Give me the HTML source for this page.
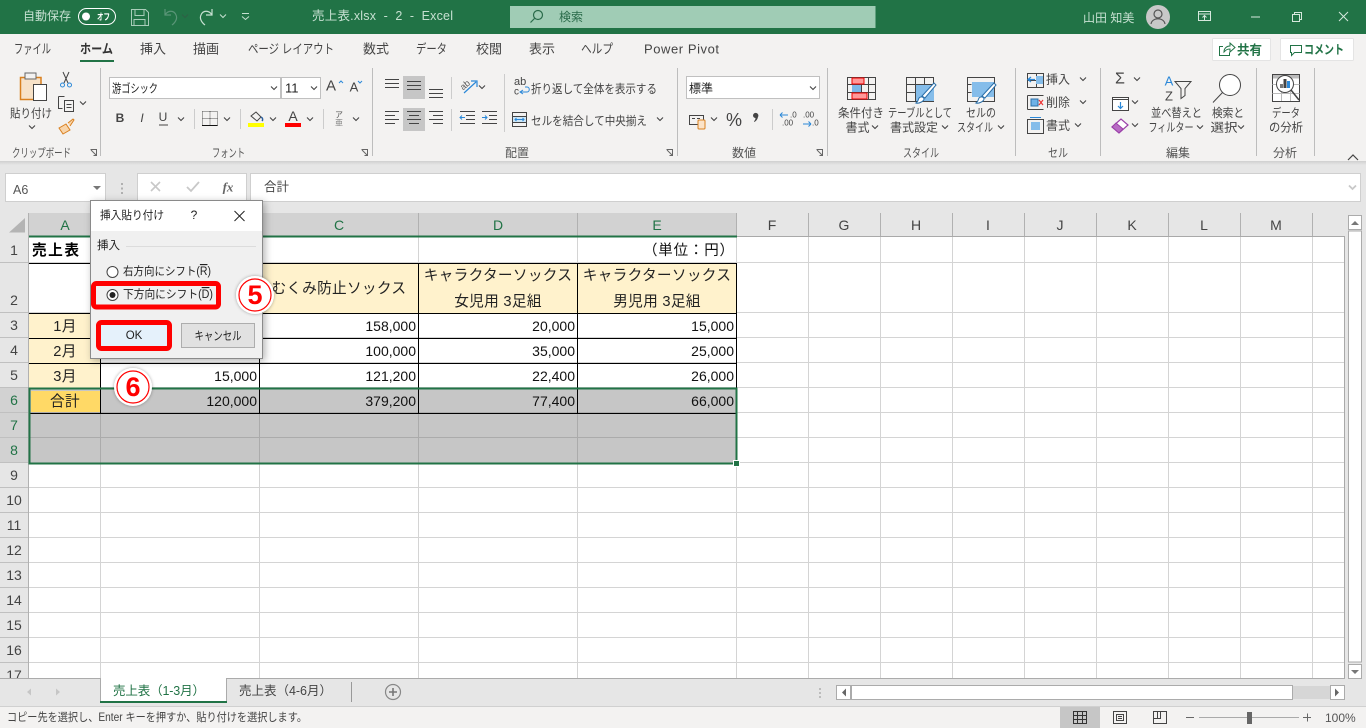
<!DOCTYPE html>
<html lang="ja"><head><meta charset="utf-8"><title>売上表</title>
<style>
html,body{margin:0;padding:0;width:1366px;height:728px;overflow:hidden;background:#e6e6e6}
svg{display:block;position:absolute;left:0;top:0}
text{font-family:"Liberation Sans","Noto Sans CJK JP",sans-serif;dominant-baseline:central;white-space:pre}
.r{font-size:12px;fill:#444;transform:translateY(.5px)}
.g{font-size:12px;fill:#555;transform:translateY(1px)}
.m{text-anchor:middle}
.e{text-anchor:end}
.tt{font-size:12px;fill:#c6e0d1}
.tab{font-size:13px;fill:#444}
.cell{font-size:14px;fill:#111;text-anchor:end}
.jp{font-size:14.67px;fill:#222;text-anchor:middle;letter-spacing:.3px}
.h{font-size:14px;fill:#444;text-anchor:middle}
.hs{font-size:14px;fill:#217346;text-anchor:middle}
.d{font-size:11.5px;fill:#222}
.i{fill:none;stroke:#444;stroke-width:1}
.b{fill:none;stroke:#666;stroke-width:1}
</style></head><body>
<svg width="1366" height="728" viewBox="0 0 1366 728" xmlns="http://www.w3.org/2000/svg">
<defs>
<path id="c" d="M-3 -1.5L0 1.5L3 -1.5" fill="none" stroke="#444" stroke-width="1.1"/>
<filter id="sh" x="-15%" y="-15%" width="130%" height="130%"><feDropShadow dx="2" dy="2" stdDeviation="4" flood-color="#000" flood-opacity=".3"/></filter>
<filter id="sh2" x="-25%" y="-25%" width="150%" height="150%"><feDropShadow dx="0" dy="0" stdDeviation="1.5" flood-color="#000" flood-opacity=".35"/></filter>
<linearGradient id="rs" x1="0" y1="0" x2="0" y2="1"><stop offset="0" stop-color="#cfcfcf"/><stop offset="1" stop-color="#e6e6e6"/></linearGradient>
</defs>

<!-- backgrounds -->
<rect width="1366" height="728" fill="#e6e6e6"/>
<rect width="1366" height="34" fill="#217346"/>
<rect y="34" width="1366" height="127" fill="#f3f2f1"/>
<rect y="161" width="1366" height="4" fill="url(#rs)"/>

<!-- title bar -->
<text x="23" y="16" class="tt">自動保存</text>
<rect x="78.500" y="8.500" width="37" height="16" rx="8" fill="none" stroke="#fff"/>
<circle cx="86" cy="16.500" r="4" fill="#fff"/>
<text x="97" y="17" font-size="9" font-weight="bold" fill="#fff" textLength="13" lengthAdjust="spacingAndGlyphs">オフ</text>
<path d="M131.500 9.500h14l3 3v13h-17zM135 9.500v6h9v-6M134 25.500v-6h11v6" fill="none" stroke="#a9cdb9"/>
<path d="M165 9v6h6M165 15c3-5 9-5 11 0 1.500 3 0 7-4 10" fill="none" stroke="#5a9577" stroke-width="1.200"/>
<use href="#c" x="185" y="16" style="opacity:.4"/>
<path d="M212 9v6h-6M212 15c-3-5-9-5-11 0-1.500 3 0 7 4 10" fill="none" stroke="#c6e0d1" stroke-width="1.200"/>
<path d="M220 14.500l3 3 3-3" fill="none" stroke="#c6e0d1"/>
<path d="M242 13.500h7M242 16.500l3.500 3 3.500-3" fill="none" stroke="#c6e0d1"/>
<text x="312" y="16" font-size="12.500" fill="#c6e0d1" textLength="141" lengthAdjust="spacing">売上表.xlsx  -  2  -  Excel</text>
<rect x="510" y="6" width="365.500" height="22" fill="#a0ccb5"/>
<circle cx="538" cy="15" r="4.500" fill="none" stroke="#2a6b4a" stroke-width="1.200"/>
<path d="M534.500 18.500l-4 4" stroke="#2a6b4a" stroke-width="1.200"/>
<text x="559" y="17" font-size="12" fill="#2a6b4a">検索</text>
<text x="1083" y="18" class="tt">山田 知美</text>
<circle cx="1158" cy="17" r="12" fill="#c8c8c8"/>
<circle cx="1158" cy="14" r="4" fill="none" stroke="#555" stroke-width="1.200"/>
<path d="M1151 24c1-7 13-7 14 0" fill="none" stroke="#555" stroke-width="1.200"/>
<path d="M1198.500 11.500h12v9h-12zM1198.500 14h12M1204.500 20v-4M1202.500 17.500l2-2 2 2" fill="none" stroke="#d6e8dd"/>
<path d="M1251 17h9" stroke="#d6e8dd"/>
<path d="M1292.500 14.500h7v7h-7zM1294.500 14.500v-2h7v7h-2" fill="none" stroke="#d6e8dd"/>
<path d="M1339 12l9 9M1348 12l-9 9" stroke="#d6e8dd"/>

<!-- tabs -->
<text x="14" y="49" class="tab" textLength="37" lengthAdjust="spacingAndGlyphs">ファイル</text>
<text x="80" y="49" class="tab" font-weight="bold" style="fill:#333" textLength="33" lengthAdjust="spacingAndGlyphs">ホーム</text>
<rect x="80" y="60" width="34" height="2" fill="#217346"/>
<text x="140" y="49" class="tab">挿入</text>
<text x="193" y="49" class="tab">描画</text>
<text x="248" y="49" class="tab" textLength="86" lengthAdjust="spacingAndGlyphs">ページ レイアウト</text>
<text x="363" y="49" class="tab">数式</text>
<text x="416" y="49" class="tab" textLength="31" lengthAdjust="spacingAndGlyphs">データ</text>
<text x="476" y="49" class="tab">校閲</text>
<text x="529" y="49" class="tab">表示</text>
<text x="581" y="49" class="tab" textLength="32" lengthAdjust="spacingAndGlyphs">ヘルプ</text>
<text x="644" y="49" class="tab" textLength="75" lengthAdjust="spacing">Power Pivot</text>
<rect x="1212.500" y="38.500" width="58" height="22" rx="1" fill="#fff" stroke="#e4e4e4"/>
<path d="M1223 46.500h-3.500v9h10v-3M1224 52c0-4 3-6 6-6v-3l5 4.500-5 4.500v-3c-3 0-4 1-6 3z" fill="none" stroke="#217346"/>
<text x="1237" y="50" font-size="13" font-weight="bold" fill="#217346" textLength="25" lengthAdjust="spacingAndGlyphs">共有</text>
<rect x="1280.500" y="38.500" width="73" height="22" rx="1" fill="#fff" stroke="#e4e4e4"/>
<path d="M1290.500 45.500h11v7h-7l-3 3v-3h-1z" fill="none" stroke="#217346"/>
<text x="1304" y="50" font-size="12.500" font-weight="bold" fill="#217346" textLength="40" lengthAdjust="spacingAndGlyphs">コメント</text>

<!-- group separators -->
<path d="M100.500 68V156M372.500 68V156M677.500 68V156M827.500 68V156M1015.500 68V156M1100.500 68V156M1256.500 68V156M1314.500 68V156" stroke="#bdbdbd"/>
<!-- group labels -->
<text x="12" y="152" class="g" textLength="59" lengthAdjust="spacingAndGlyphs">クリップボード</text>
<text x="228.500" y="152" class="g m" textLength="33" lengthAdjust="spacingAndGlyphs">フォント</text>
<text x="517" y="152" class="g m">配置</text>
<text x="744" y="152" class="g m">数値</text>
<text x="921" y="152" class="g m" textLength="36" lengthAdjust="spacingAndGlyphs">スタイル</text>
<text x="1058" y="152" class="g m" textLength="20" lengthAdjust="spacingAndGlyphs">セル</text>
<text x="1178" y="152" class="g m">編集</text>
<text x="1285" y="152" class="g m">分析</text>
<path class="b" d="M90.500 149.500h6v6M91 150l5 5M96.500 152.500v3h-3"/>
<path class="b" d="M361.500 149.500h6v6M362 150l5 5M367.500 152.500v3h-3"/>
<path class="b" d="M666.500 149.500h6v6M667 150l5 5M672.500 152.500v3h-3"/>
<path class="b" d="M816.500 149.500h6v6M817 150l5 5M822.500 152.500v3h-3"/>
<path d="M1348 160l5-5 5 5" fill="none" stroke="#444" stroke-width="1.200"/>

<!-- clipboard -->
<path d="M20.500 77.500h20.500v22h-20.500z" fill="#f7e2c8" stroke="#d9801f" stroke-width="1.500"/>
<rect x="25" y="73" width="11" height="6" fill="#f3f2f1" stroke="#666"/>
<rect x="33.500" y="84.500" width="13" height="16" fill="#fff" stroke="#444"/>
<text x="31" y="113" class="r m" textLength="42" lengthAdjust="spacingAndGlyphs">貼り付け</text>
<use href="#c" x="32" y="127"/>
<path d="M63 72l5 11M69 72l-5 11" stroke="#444" fill="none"/>
<circle cx="62.500" cy="85" r="2" fill="none" stroke="#2b88d8"/><circle cx="69.500" cy="85" r="2" fill="none" stroke="#2b88d8"/>
<path d="M58.500 96.500h6M58.500 96.500v12h4M64.500 100.500h9v11h-9zM66.500 104.500h5M66.500 107.500h5" fill="none" stroke="#444"/>
<use href="#c" x="83" y="103"/>
<path d="M59 128l7-4 4 6-7 4zM68 123l5-4 1 1-4 6" fill="#f8d5ab" stroke="#d9801f"/>

<!-- font group -->
<rect x="109.500" y="77.500" width="171" height="21" fill="#fff" stroke="#c0c0c0"/>
<rect x="281.500" y="77.500" width="39" height="21" fill="#fff" stroke="#c0c0c0"/>
<text x="112" y="88" class="r" style="fill:#222" textLength="46" lengthAdjust="spacingAndGlyphs">游ゴシック</text>
<use href="#c" x="274" y="88"/>
<text x="285" y="88" font-size="13" fill="#222">11</text>
<use href="#c" x="314" y="88"/>
<text x="331" y="86" font-size="15" fill="#444" text-anchor="middle">A</text>
<path d="M339 83l2-2 2 2" fill="none" stroke="#2b88d8"/>
<text x="354" y="87" font-size="13" fill="#444" text-anchor="middle">A</text>
<path d="M358 81l2 2 2-2" fill="none" stroke="#2b88d8"/>
<text x="120" y="118" font-size="12" font-weight="bold" fill="#444" text-anchor="middle">B</text>
<text x="142" y="118" font-size="12" font-style="italic" fill="#444" text-anchor="middle">I</text>
<text x="163" y="117" font-size="12" fill="#444" text-anchor="middle">U</text>
<path d="M159 125h9" stroke="#444"/>
<use href="#c" x="181" y="119"/>
<path d="M194.500 109v20M240.500 109v20M323.500 109v20M451.500 77v22M451.500 109v22M504.500 74v58" stroke="#ccc"/>
<path d="M202.500 111.500h15v14M202.500 111.500v14M210 111.500v14M202.500 118.500h15" fill="none" stroke="#555" stroke-dasharray="1 1"/>
<path d="M202 125.500h15.500" stroke="#111"/>
<use href="#c" x="227" y="119"/>
<path d="M251 116l5-4 5 5-4 4z" fill="none" stroke="#444"/><path d="M261 117c2 1 2 3 1 4" stroke="#2b5f9e" fill="none" stroke-width="1.500"/>
<rect x="248" y="123" width="16" height="4" fill="#ffff00"/>
<use href="#c" x="273" y="119"/>
<text x="293" y="116" font-size="14" fill="#444" text-anchor="middle">A</text>
<rect x="285" y="123" width="16" height="4" fill="#ff0000"/>
<use href="#c" x="310" y="119"/>
<text x="339" y="115" font-size="8" fill="#555" text-anchor="middle">ア</text>
<text x="339" y="123" font-size="8" fill="#888" text-anchor="middle">亜</text>
<use href="#c" x="356" y="119"/>

<!-- alignment -->
<rect x="403" y="76" width="22" height="23" fill="#c6c6c6"/>
<rect x="403" y="108" width="22" height="23" fill="#c6c6c6"/>
<path d="M385 79.500h14M385 83.500h14M385 87.500h14M407 81.500h14M407 85.500h14M407 89.500h14M429 89.500h14M429 93.500h14M429 97.500h14" stroke="#444"/>
<path d="M385 111.500h14M385 115.500h10M385 119.500h14M385 123.500h10M407 111.500h14M409 115.500h10M407 119.500h14M409 123.500h10M429 111.500h14M433 115.500h10M429 119.500h14M433 123.500h10" stroke="#444"/>
<text x="465" y="85" font-size="9" fill="#555" transform="rotate(-40 465 85)" text-anchor="middle">ab</text>
<path d="M464 93l12-11M471 81h6v6" fill="none" stroke="#2b88d8" stroke-width="1.200"/>
<use href="#c" x="482" y="87"/>
<path d="M460 111.500h15M466 115.500h9M466 119.500h9M460 123.500h15M482 111.500h15M489 115.500h8M489 119.500h8M482 123.500h15" stroke="#444"/>
<path d="M465 117.500h-5M462 115.500l-2 2 2 2M482 117.500h5M485 115.500l2 2-2 2" fill="none" stroke="#2b88d8"/>
<text x="514" y="82" font-size="11" fill="#444">ab</text>
<text x="514" y="92" font-size="10" fill="#444">c</text>
<path d="M520 92h7c3 0 3-5 0-5h-2M523 90l-3 2 3 2" fill="none" stroke="#2b88d8"/>
<text x="531" y="88.500" class="r" textLength="126" lengthAdjust="spacingAndGlyphs">折り返して全体を表示する</text>
<path d="M512.500 112.500h14v14h-14zM512.500 116.500h14M512.500 122.500h14" fill="none" stroke="#444"/>
<rect x="513" y="117" width="13" height="5" fill="#cde6f7"/>
<path d="M515 119.500h9M516.500 118l-1.500 1.500 1.500 1.500M522.500 118l1.500 1.500-1.500 1.500" fill="none" stroke="#2b88d8"/>
<text x="531" y="120.500" class="r" textLength="116" lengthAdjust="spacingAndGlyphs">セルを結合して中央揃え</text>
<use href="#c" x="660" y="119"/>

<!-- number -->
<rect x="686.500" y="76.500" width="133" height="22" fill="#fff" stroke="#c0c0c0"/>
<text x="689" y="88" class="r" style="fill:#222">標準</text>
<use href="#c" x="813" y="88"/>
<path d="M689.500 115.500h14v9h-14zM692 118.500h3M697 118.500h3" fill="none" stroke="#444"/>
<rect x="698" y="120" width="7" height="9" rx="1" fill="#fbe3c8" stroke="#d9801f"/>
<use href="#c" x="714" y="119"/>
<text x="734" y="120" font-size="18" fill="#444" text-anchor="middle">%</text>
<path d="M753 115.500a2.700 2.700 0 1 1 5 1.500c-.5 2.500-2 4-3.500 5l-.5-.7c1-1 1.500-2 1.500-3.300a2.700 2.700 0 0 1-2.500-2.500z" fill="#444"/>
<path d="M772.500 109v21" stroke="#ccc"/>
<path d="M780 115h8M780 115l2.500-2.500M780 115l2.500 2.500M803 124h8M811 124l-2.500-2.500M811 124l-2.500 2.500" fill="none" stroke="#2b88d8"/>
<text x="790" y="115" font-size="8" fill="#444">.0</text>
<text x="782" y="123" font-size="8" fill="#444">.00</text>
<text x="803" y="115" font-size="8" fill="#444">.00</text>
<text x="812" y="123" font-size="8" fill="#444">.0</text>

<!-- styles -->
<path d="M847.500 77.500h28v22h-28zM847.500 84.500h28M847.500 92.500h28M854.500 77.500v22M861.500 77.500v22M868.500 77.500v22" fill="none" stroke="#444"/>
<rect x="852" y="78" width="12" height="6" fill="#f99" stroke="#e00"/><rect x="852" y="93" width="15" height="6" fill="#f99" stroke="#e00"/><rect x="852" y="85" width="9" height="7" fill="#7db8e8"/>
<path d="M906.500 77.500h27v24h-27zM906.500 84.500h27M906.500 92.500h27M915.500 77.500v24M924.500 77.500v24" fill="none" stroke="#444"/>
<rect x="916" y="85" width="18" height="16" fill="#85bdea"/>
<path d="M922 96l12-13 2 2-11 13zM919 98c2-2 5-1 5 1s-5 5-8 4c2-1 2-3 3-5z" fill="#fff" stroke="#2b6fa8"/>
<path d="M967.500 77.500h27v24h-27z" fill="none" stroke="#444"/>
<rect x="972" y="82" width="22" height="15" fill="#85bdea"/>
<path d="M967.500 84.500h4M967.500 92.500h4" stroke="#444"/>
<path d="M982 96l12-13 2 2-11 13zM979 98c2-2 5-1 5 1s-5 5-8 4c2-1 2-3 3-5z" fill="#fff" stroke="#2b6fa8"/>
<text x="861" y="112.500" class="r m" textLength="46" lengthAdjust="spacingAndGlyphs">条件付き</text>
<text x="857.500" y="127" class="r m" textLength="24" lengthAdjust="spacingAndGlyphs">書式</text><use href="#c" x="875" y="127"/>
<text x="920" y="112.500" class="r m" textLength="64" lengthAdjust="spacingAndGlyphs">テーブルとして</text>
<text x="914" y="127" class="r m" textLength="48" lengthAdjust="spacingAndGlyphs">書式設定</text><use href="#c" x="945" y="127"/>
<text x="981" y="112.500" class="r m" textLength="30" lengthAdjust="spacingAndGlyphs">セルの</text>
<text x="975" y="127" class="r m" textLength="36" lengthAdjust="spacingAndGlyphs">スタイル</text><use href="#c" x="1001" y="127"/>

<!-- cells -->
<path d="M1027.500 73.500h16v14h-16zM1027.500 80.500h16M1036.500 73.500v14" fill="none" stroke="#444"/>
<rect x="1036" y="76" width="7" height="8" fill="#85bdea"/>
<path d="M1035 79.500h-7M1031 77l-3 2.500 3 2.500" fill="none" stroke="#2b88d8" stroke-width="1.200"/>
<text x="1046" y="79" class="r" textLength="24" lengthAdjust="spacingAndGlyphs">挿入</text><use href="#c" x="1083" y="79"/>
<path d="M1027.500 95.500h16M1027.500 109.500h16M1027.500 95.500v14" fill="none" stroke="#444"/>
<rect x="1031" y="99" width="7" height="7" fill="#6fb1e6" stroke="#2b6fa8"/>
<path d="M1039 100l4 5M1043 100l-4 5" stroke="#e33" stroke-width="1.200"/>
<text x="1046" y="102" class="r" textLength="24" lengthAdjust="spacingAndGlyphs">削除</text><use href="#c" x="1083" y="102"/>
<path d="M1027.500 119.500h16v14h-16z" fill="none" stroke="#444"/>
<rect x="1031" y="122" width="9" height="8" fill="#85bdea"/>
<path d="M1030 117.500h11" stroke="#2b88d8"/>
<text x="1046" y="125" class="r" textLength="24" lengthAdjust="spacingAndGlyphs">書式</text><use href="#c" x="1078" y="125"/>

<!-- editing -->
<text x="1120" y="79" font-size="16" fill="#444" text-anchor="middle">Σ</text><use href="#c" x="1137" y="79"/>
<path d="M1112.500 97.500h16v13h-16z" fill="#fff" stroke="#444"/>
<path d="M1112.500 99.500h16" stroke="#444"/>
<path d="M1120.500 102v6M1118 106l2.500 2.500 2.500-2.500" fill="none" stroke="#2b88d8" stroke-width="1.200"/>
<use href="#c" x="1135" y="102"/>
<path d="M1112 127l9-8 7 6-9 8z" fill="#fff" stroke="#9a3fa8" stroke-width="1.200"/>
<path d="M1112 127l4-4 7 6-4 4z" fill="#b86bc4" stroke="#9a3fa8"/>
<use href="#c" x="1135" y="125"/>
<text x="1169" y="81" font-size="13" fill="#2b88d8" text-anchor="middle">A</text>
<text x="1169" y="96" font-size="13" fill="#444" text-anchor="middle">Z</text>
<path d="M1175 81.500h16l-6 7v7l-4 3v-10z" fill="none" stroke="#444"/>
<text x="1176.500" y="112.500" class="r m" textLength="51" lengthAdjust="spacingAndGlyphs">並べ替えと</text>
<text x="1171" y="127" class="r m" textLength="45" lengthAdjust="spacingAndGlyphs">フィルター</text><use href="#c" x="1200" y="127"/>
<circle cx="1230" cy="85" r="10.500" fill="#fff" stroke="#444"/>
<path d="M1222.500 92.500l-9.500 10" stroke="#444"/>
<text x="1228" y="112.500" class="r m" textLength="32" lengthAdjust="spacingAndGlyphs">検索と</text>
<text x="1224" y="127" class="r m" textLength="27" lengthAdjust="spacingAndGlyphs">選択</text><use href="#c" x="1241" y="127"/>

<!-- analysis -->
<rect x="1272.500" y="74.500" width="27" height="27" fill="#fff" stroke="#444"/>
<rect x="1273" y="75" width="26" height="3.500" fill="#bbb"/>
<path d="M1272.500 84.500h27M1272.500 93.500h27M1281.500 78v23M1290.500 78v23" stroke="#bbb"/>
<circle cx="1285" cy="84" r="8.500" fill="#fff" stroke="#444"/>
<rect x="1280" y="84" width="3" height="4" fill="#777"/><rect x="1283.500" y="79" width="3" height="9" fill="#444"/><rect x="1287" y="81" width="3" height="7" fill="#2b88d8"/>
<path d="M1291 90l8 10" stroke="#444" stroke-width="1.500"/>
<text x="1286" y="112.500" class="r m" textLength="28" lengthAdjust="spacingAndGlyphs">データ</text>
<text x="1286" y="127" class="r m" textLength="34" lengthAdjust="spacingAndGlyphs">の分析</text>

<!-- formula bar -->
<rect x="5.500" y="173.500" width="100" height="28" fill="#fff" stroke="#cfcfcf"/>
<text x="13" y="190" font-size="12.500" fill="#555">A6</text>
<path d="M93 186h8l-4 4z" fill="#777"/>
<path d="M122 183v2M122 187.500v2M122 192v2" stroke="#999" stroke-width="1.400"/>
<rect x="137.500" y="173.500" width="109" height="28" fill="#fff" stroke="#cfcfcf"/>
<path d="M151 182l9 9M160 182l-9 9" stroke="#c8c8c8" stroke-width="1.600"/>
<path d="M187 187l4 4 8-9" fill="none" stroke="#c8c8c8" stroke-width="1.800"/>
<text x="228" y="187" font-size="13" font-style="italic" font-weight="bold" fill="#666" text-anchor="middle" style="font-family:'Liberation Serif',serif">fx</text>
<rect x="250.500" y="173.500" width="1110" height="28" fill="#fff" stroke="#cfcfcf"/>
<text x="264" y="187" font-size="12.500" fill="#444">合計</text>
<path d="M1349 185.500l3.500 3.500 3.500-3.500" fill="none" stroke="#c8c8c8" stroke-width="1.800"/>

<!-- sheet background -->
<rect x="29" y="237" width="1315.500" height="441" fill="#fff"/>
<!-- column headers -->
<rect x="0" y="213" width="1344" height="24" fill="#e6e6e6"/>
<rect x="29" y="213" width="708" height="24" fill="#d2d2d2"/>
<path d="M9 232.500L25 232.500L25 218z" fill="#b4b4b4"/>
<path d="M28.500 213V678M100.500 213V237M259.500 213V237M418.500 213V237M577.500 213V237M736.500 213V237M808.500 213V237M880.500 213V237M952.500 213V237M1024.500 213V237M1096.500 213V237M1168.500 213V237M1240.500 213V237M1312.500 213V237" stroke="#b1b1b1"/>
<text x="65" y="225" class="hs">A</text><text x="339" y="225" class="hs">C</text><text x="498" y="225" class="hs">D</text><text x="657" y="225" class="hs">E</text>
<text x="772" y="225" class="h">F</text><text x="844" y="225" class="h">G</text><text x="916" y="225" class="h">H</text><text x="988" y="225" class="h">I</text><text x="1060" y="225" class="h">J</text><text x="1132" y="225" class="h">K</text><text x="1204" y="225" class="h">L</text><text x="1276" y="225" class="h">M</text>
<!-- row headers -->
<rect x="0" y="388" width="28" height="75" fill="#d2d2d2"/>
<path d="M0 262.500h28M0 312.500h28M0 337.500h28M0 362.500h28M0 387.500h28M0 412.500h28M0 437.500h28M0 462.500h28M0 487.500h28M0 512.500h28M0 537.500h28M0 562.500h28M0 587.500h28M0 612.500h28M0 637.500h28M0 662.500h28" stroke="#c0c0c0"/>
<text x="14" y="250" class="h">1</text><text x="14" y="300" class="h">2</text><text x="14" y="325" class="h">3</text><text x="14" y="350" class="h">4</text><text x="14" y="375" class="h">5</text>
<text x="14" y="400" class="hs">6</text><text x="14" y="425" class="hs">7</text><text x="14" y="450" class="hs">8</text>
<text x="14" y="475" class="h">9</text><text x="14" y="500" class="h">10</text><text x="14" y="525" class="h">11</text><text x="14" y="550" class="h">12</text><text x="14" y="575" class="h">13</text><text x="14" y="600" class="h">14</text><text x="14" y="625" class="h">15</text><text x="14" y="650" class="h">16</text><text x="14" y="675" class="h">17</text>

<!-- gridlines -->
<path d="M100.500 237V678M259.500 237V678M418.500 237V678M577.500 237V678M736.500 237V678M808.500 237V678M880.500 237V678M952.500 237V678M1024.500 237V678M1096.500 237V678M1168.500 237V678M1240.500 237V678M1312.500 237V678" stroke="#d4d4d4"/>
<path d="M29 262.500H1344M29 312.500H1344M29 337.500H1344M29 362.500H1344M29 387.500H1344M29 412.500H1344M29 437.500H1344M29 462.500H1344M29 487.500H1344M29 512.500H1344M29 537.500H1344M29 562.500H1344M29 587.500H1344M29 612.500H1344M29 637.500H1344M29 662.500H1344" stroke="#d4d4d4"/>
<path d="M737 236.500H1344.500V678" fill="none" stroke="#a9a9a9"/>

<!-- fills -->
<rect x="260" y="264" width="476" height="49" fill="#fff2cc"/>
<rect x="29" y="314" width="71" height="74" fill="#fff2cc"/>
<rect x="29" y="388" width="708" height="75" fill="#c6c6c6"/>
<rect x="31" y="391" width="69" height="22" fill="#ffd966"/>
<path d="M29 437.500H737M100.500 413V463M259.500 413V463M418.500 413V463M577.500 413V463M29 412.500H737" stroke="#ababab"/>
<!-- black borders -->
<path d="M29 263.500H737M29 313.500H737M29 338.500H737M29 363.500H737M29 413.500H736M100.500 263V414M259.500 263V414M418.500 263V414M577.500 263V414M736.500 263V388" stroke="#000"/>

<!-- cell text -->
<text x="32" y="251" font-size="14.670" font-weight="bold" fill="#000" textLength="47" lengthAdjust="spacing">売上表</text>
<text x="734" y="251" class="cell" style="font-size:14.500px" textLength="91" lengthAdjust="spacing">（単位：円）</text>
<text x="339" y="289" class="jp">むくみ防止ソックス</text>
<text x="498" y="276" class="jp">キャラクターソックス</text>
<text x="498" y="302" class="jp">女児用 3足組</text>
<text x="657" y="276" class="jp">キャラクターソックス</text>
<text x="657" y="302" class="jp">男児用 3足組</text>
<text x="65" y="327" class="jp">1月</text><text x="65" y="352" class="jp">2月</text><text x="65" y="377" class="jp">3月</text><text x="65" y="402" class="jp">合計</text>
<g transform="translate(-1,1)">
<text x="258" y="375" class="cell">15,000</text><text x="258" y="400" class="cell">120,000</text>
<text x="417" y="325" class="cell">158,000</text><text x="417" y="350" class="cell">100,000</text><text x="417" y="375" class="cell">121,200</text><text x="417" y="400" class="cell">379,200</text>
<text x="576" y="325" class="cell">20,000</text><text x="576" y="350" class="cell">35,000</text><text x="576" y="375" class="cell">22,400</text><text x="576" y="400" class="cell">77,400</text>
<text x="735" y="325" class="cell">15,000</text><text x="735" y="350" class="cell">25,000</text><text x="735" y="375" class="cell">26,000</text><text x="735" y="400" class="cell">66,000</text>
</g>

<!-- selection -->
<path d="M29 236.500H737" stroke="#217346" stroke-width="2"/>
<rect x="29.500" y="388.500" width="707" height="75" fill="none" stroke="#217346" stroke-width="2"/>
<rect x="733.500" y="460.500" width="6" height="6" fill="#217346" stroke="#fff"/>

<!-- vertical scrollbar -->
<rect x="1345" y="213" width="21" height="465" fill="#e6e6e6"/>
<rect x="1348.500" y="215.500" width="13" height="14" fill="#fff" stroke="#ababab"/>
<path d="M1351 225h8l-4-4z" fill="#777"/>
<rect x="1348.500" y="231" width="13" height="431" fill="#fff" stroke="#ababab"/>
<rect x="1348.500" y="664.500" width="13" height="14" fill="#fff" stroke="#ababab"/>
<path d="M1351 670h8l-4 4z" fill="#777"/>

<!-- bottom bar -->
<rect y="679" width="1366" height="27" fill="#e6e6e6"/>
<path d="M0 678.500H100M226 678.500H1345" stroke="#ababab"/>
<rect x="100.500" y="678" width="126" height="24" fill="#fff"/>
<path d="M100.500 678V702M226.500 678V702" stroke="#ababab"/>
<rect x="100" y="701" width="127" height="2" fill="#217346"/>
<path d="M31 688.500v7l-4-3.500zM56 688.500v7l4-3.500z" fill="#c6c6c6"/>
<text x="113" y="691" font-size="12.500" fill="#217346" textLength="92" lengthAdjust="spacing">売上表（1-3月）</text>
<text x="239" y="691" font-size="12.500" fill="#444" textLength="93" lengthAdjust="spacing">売上表（4-6月）</text>
<path d="M351.500 682v20" stroke="#999"/>
<circle cx="393" cy="692" r="7.500" fill="none" stroke="#888" stroke-width="1.200"/>
<path d="M389 692h8M393 688v8" stroke="#777" stroke-width="1.600"/>
<path d="M820 688v2M820 692v2M820 696v2" stroke="#aaa" stroke-width="1.400"/>
<rect x="836.500" y="685.500" width="14" height="14" fill="#fff" stroke="#ababab"/>
<path d="M846 688.500v8l-4-4z" fill="#666"/>
<rect x="851.500" y="685.500" width="441" height="14" fill="#fff" stroke="#ababab"/>
<rect x="1293" y="686" width="37" height="13" fill="#d6d6d6"/>
<rect x="1330.500" y="685.500" width="14" height="14" fill="#fff" stroke="#ababab"/>
<path d="M1335 688.500v8l4-4z" fill="#666"/>

<!-- status bar -->
<rect y="707" width="1366" height="21" fill="#f3f2f1"/>
<path d="M0 706.500H1366" stroke="#d0d0d0"/>
<text x="7" y="718" font-size="11.500" fill="#444" textLength="300" lengthAdjust="spacingAndGlyphs">コピー先を選択し、Enter キーを押すか、貼り付けを選択します。</text>
<rect x="1060" y="707" width="40" height="21" fill="#c6c6c6"/>
<path d="M1073.500 711.500h13v12h-13zM1073.500 715.500h13M1073.500 719.500h13M1077.500 711.500v12M1082.500 711.500v12" fill="none" stroke="#333"/>
<path d="M1113.500 711.500h13v12h-13zM1116.500 714.500h7v6h-7zM1118 716.500h4M1118 718.500h4" fill="none" stroke="#444"/>
<path d="M1153.500 711.500h13v12h-13zM1153.500 718.500h7v-7M1157.500 718.500v-7" fill="none" stroke="#444"/>
<path d="M1186 717.500h8" stroke="#666"/>
<path d="M1199 717.500h100" stroke="#aaa"/>
<rect x="1247" y="712" width="5" height="12" fill="#666"/>
<path d="M1303 717.500h8M1307.500 713.500v8" stroke="#666"/>
<text x="1325" y="718" font-size="12" fill="#555">100%</text>

<!-- dialog -->
<g filter="url(#sh)">
<rect x="90.500" y="200.500" width="172" height="158" fill="#f0f0f0" stroke="#8a8a8a"/>
</g>
<rect x="91" y="201" width="171" height="30" fill="#fff"/>
<text x="100" y="216" class="d" textLength="64" lengthAdjust="spacingAndGlyphs">挿入貼り付け</text>
<text x="194" y="215" font-size="12" fill="#222" text-anchor="middle">?</text>
<path d="M234.500 211l10 10M244.500 211l-10 10" stroke="#222"/>
<text x="97" y="246" class="d">挿入</text>
<path d="M126 246.500H256" stroke="#dcdcdc"/>
<circle cx="112.500" cy="272" r="5.500" fill="#fff" stroke="#444"/>
<text x="123" y="272" class="d" textLength="88" lengthAdjust="spacingAndGlyphs">右方向にシフト(<tspan text-decoration="underline">R</tspan>)</text>
<rect x="93.500" y="283.500" width="125" height="23.500" rx="3" fill="#f0f0f0" stroke="#f00" stroke-width="5"/>
<circle cx="112.500" cy="295" r="5.500" fill="#fff" stroke="#444"/>
<circle cx="112.500" cy="295" r="3" fill="#222"/>
<text x="123" y="295" class="d" textLength="90" lengthAdjust="spacingAndGlyphs">下方向にシフト(<tspan text-decoration="underline">D</tspan>)</text>
<rect x="98.500" y="322.500" width="71" height="26" rx="3" fill="#e5f1fb" stroke="#f00" stroke-width="5"/>
<text x="134" y="336" font-size="11.500" fill="#222" text-anchor="middle">OK</text>
<rect x="181.500" y="323.500" width="73" height="24" fill="#e1e1e1" stroke="#adadad"/>
<text x="218" y="336" font-size="12" fill="#222" text-anchor="middle" textLength="47" lengthAdjust="spacingAndGlyphs">キャンセル</text>

<!-- callouts -->
<g filter="url(#sh2)"><circle cx="255" cy="295" r="19" fill="#fff"/></g>
<circle cx="255" cy="295" r="16" fill="#fff" stroke="#f00" stroke-width="1.200"/>
<text x="255" y="295" font-size="27" font-weight="bold" fill="#f00" text-anchor="middle">5</text>
<g filter="url(#sh2)"><circle cx="133" cy="387" r="19" fill="#fff"/></g>
<circle cx="133" cy="387" r="16" fill="#fff" stroke="#f00" stroke-width="1.200"/>
<text x="133" y="387" font-size="27" font-weight="bold" fill="#f00" text-anchor="middle">6</text>
</svg>
</body></html>
